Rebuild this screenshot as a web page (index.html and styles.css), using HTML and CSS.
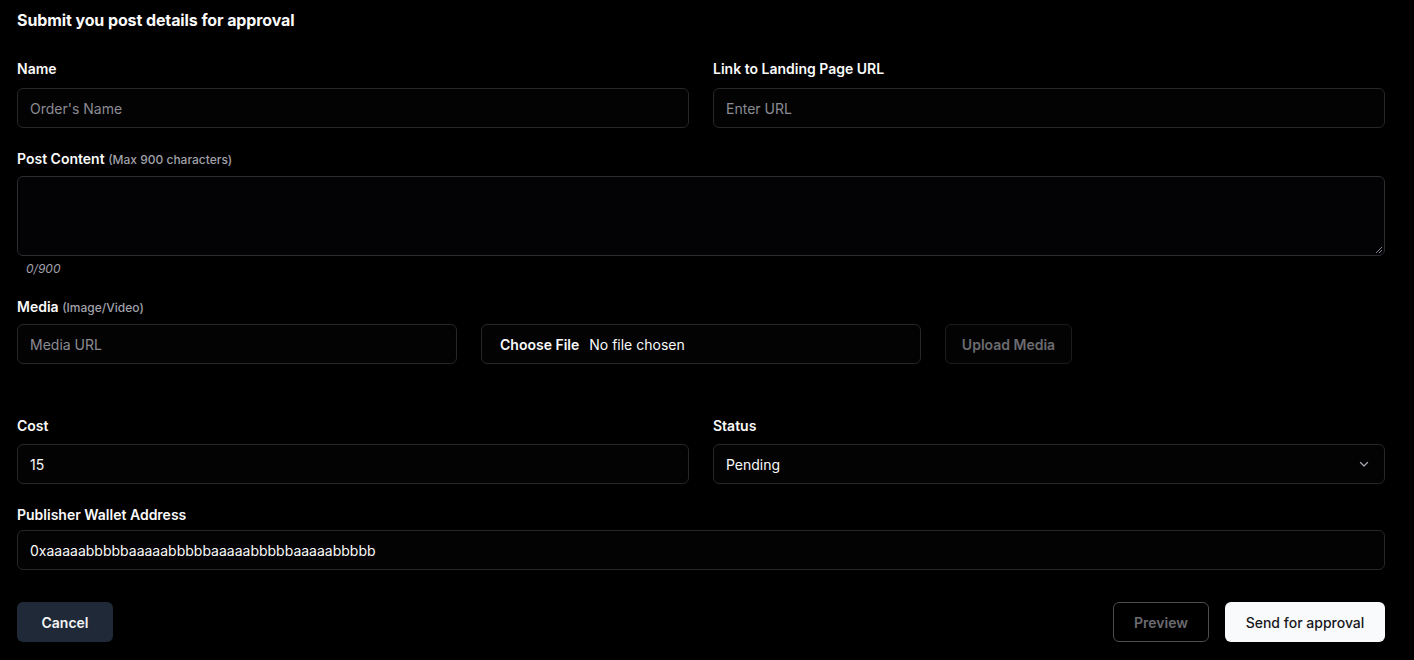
FILE: index.html
```html
<!DOCTYPE html>
<html>
<head>
<meta charset="utf-8">
<link rel="stylesheet" href="styles.css">
</head>
<body>
<div class="page">
  <h1 class="title">Submit you post details for approval</h1>

  <div class="grid2 row-name">
    <div class="field">
      <label class="label">Name</label>
      <div class="input placeholder">Order's Name</div>
    </div>
    <div class="field">
      <label class="label">Link to Landing Page URL</label>
      <div class="input placeholder">Enter URL</div>
    </div>
  </div>

  <div class="field row-post">
    <label class="label">Post Content <span class="hint">(Max 900 characters)</span></label>
    <div class="textarea">
      <svg class="grip" width="9" height="9" viewBox="0 0 9 9"><path d="M8 2 L2 8 M8 5 L5 8" stroke="#8a8a90" stroke-width="1"/></svg>
    </div>
    <div class="counter">0/900</div>
  </div>

  <div class="field row-media">
    <label class="label">Media <span class="hint">(Image/Video)</span></label>
    <div class="media-row">
      <div class="input placeholder media-url">Media URL</div>
      <div class="input file">
        <span class="file-btn">Choose File</span>
        <span class="file-name">No file chosen</span>
      </div>
      <button class="btn upload">Upload Media</button>
    </div>
  </div>

  <div class="grid2 row-cost">
    <div class="field">
      <label class="label">Cost</label>
      <div class="input value">15</div>
    </div>
    <div class="field">
      <label class="label">Status</label>
      <div class="input value select">
        <span>Pending</span>
        <svg class="chev" width="12" height="12" viewBox="0 0 12 12"><path d="M2.5 4.5 L6 8 L9.5 4.5" fill="none" stroke="#a1a1aa" stroke-width="1.4" stroke-linecap="round" stroke-linejoin="round"/></svg>
      </div>
    </div>
  </div>

  <div class="field row-wallet">
    <label class="label">Publisher Wallet Address</label>
    <div class="input value">0xaaaaabbbbbaaaaabbbbbaaaaabbbbbaaaaabbbbb</div>
  </div>

  <div class="actions">
    <button class="btn cancel">Cancel</button>
    <div class="actions-right">
      <button class="btn preview">Preview</button>
      <button class="btn send">Send for approval</button>
    </div>
  </div>
</div>
</body>
</html>
```

FILE: styles.css
```css
html, body {
  margin: 0;
  padding: 0;
  background: #000;
}
body {
  font-family: Inter, "Noto Sans", sans-serif;
  color: #fafafa;
  width: 1414px;
  height: 660px;
  overflow: hidden;
}
.page {
  padding: 10px 29px 0 17px;
}
.title {
  margin: 0;
  font-size: 16px;
  line-height: 20px;
  font-weight: 700;
  letter-spacing: -0.1px;
  color: #fafafa;
}
.grid2 {
  display: grid;
  grid-template-columns: 1fr 1fr;
  column-gap: 24px;
}
.field {
  display: flex;
  flex-direction: column;
}
.label {
  font-size: 14px;
  line-height: 20px;
  font-weight: 600;
  color: #fafafa;
  margin-bottom: 9px;
}
.hint {
  font-size: 12px;
  font-weight: 500;
  color: #a1a1aa;
}
.input {
  box-sizing: border-box;
  height: 40px;
  border: 1px solid #27272a;
  border-radius: 6px;
  background: #030304;
  padding: 0 12px;
  display: flex;
  align-items: center;
  font-size: 14px;
  font-weight: 400;
}
.placeholder { color: #8b8b93; }
.value { color: #fafafa; font-weight: 400; }
.row-name { margin-top: 29px; }
.row-post { margin-top: 21px; }
.row-post .label { margin-bottom: 6px; }
.textarea {
  box-sizing: border-box;
  height: 80px;
  border: 1px solid #2c2c31;
  border-radius: 6px;
  background: #030305;
  position: relative;
}
.grip {
  position: absolute;
  right: 1px;
  bottom: 1px;
}
.counter {
  margin-top: 5px;
  padding-left: 9px;
  font-size: 12px;
  line-height: 16px;
  font-style: italic;
  color: #a1a1aa;
}
.row-media { margin-top: 20px; }
.row-media .label { margin-bottom: 6px; }
.media-row {
  display: flex;
  gap: 24px;
}
.media-url { width: 440px; }
.file { width: 440px; padding-left: 18px; }
.file-btn { font-weight: 600; color: #fafafa; margin-right: 10px; }
.file-name { color: #fafafa; font-weight: 400; }
.btn {
  box-sizing: border-box;
  height: 40px;
  border-radius: 6px;
  font-family: inherit;
  font-size: 14px;
  font-weight: 600;
  cursor: pointer;
  padding: 0 8px;
  white-space: nowrap;
}
.upload {
  width: 127px;
  background: #030304;
  border: 1px solid #1c1c20;
  color: #6b6b70;
}
.row-cost { margin-top: 52px; }
.row-cost .label { margin-bottom: 8px; }
.row-wallet { margin-top: 21px; }
.row-wallet .label { margin-bottom: 5px; }
.select { justify-content: space-between; padding-right: 14px; }
.chev { display: block; }
.actions {
  margin-top: 32px;
  display: flex;
  justify-content: space-between;
}
.actions-right {
  display: flex;
  gap: 16px;
}
.cancel {
  width: 96px;
  background: #1f2937;
  border: none;
  color: #f3f4f6;
}
.preview {
  width: 96px;
  background: #000;
  border: 1px solid #4b4b50;
  color: #6b6b70;
}
.send {
  width: 160px;
  background: #f9fafb;
  border: none;
  color: #18181b;
  font-weight: 500;
}
```
